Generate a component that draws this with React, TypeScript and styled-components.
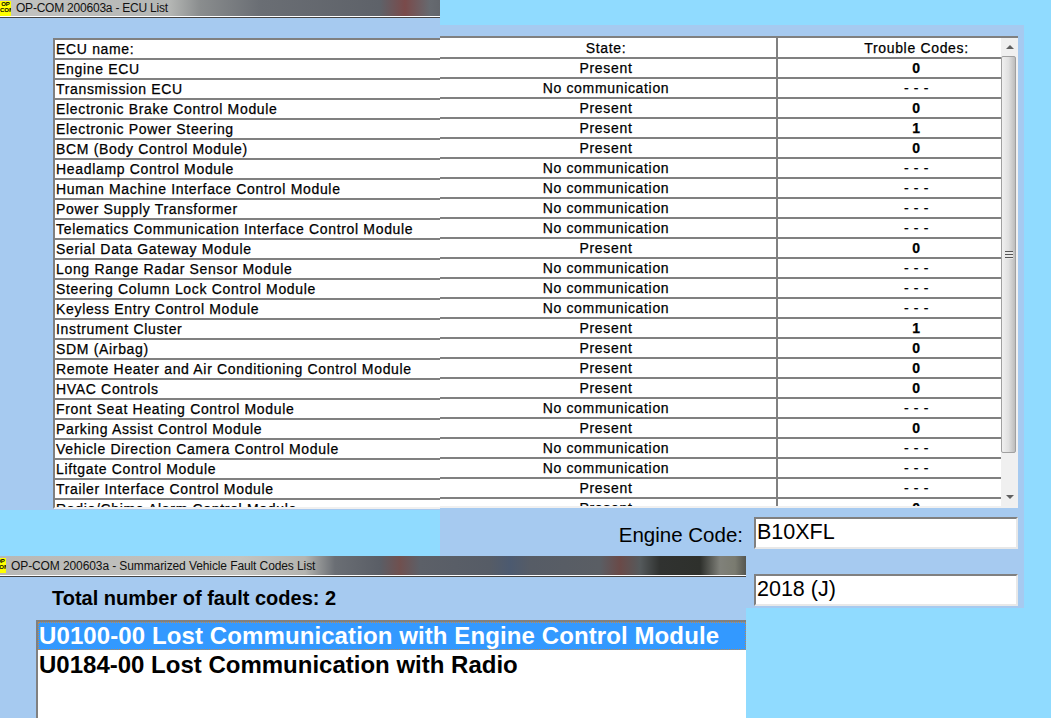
import { createGlobalStyle, styled } from "styled-components";

interface EcuRow {
  name: string;
  state: string;
  codes: string;
}

const NONE = "No communication";
const OK = "Present";
const DASH = "- - -";

const rows: EcuRow[] = [
  { name: "Engine ECU", state: OK, codes: "0" },
  { name: "Transmission ECU", state: NONE, codes: DASH },
  { name: "Electronic Brake Control Module", state: OK, codes: "0" },
  { name: "Electronic Power Steering", state: OK, codes: "1" },
  { name: "BCM (Body Control Module)", state: OK, codes: "0" },
  { name: "Headlamp Control Module", state: NONE, codes: DASH },
  { name: "Human Machine Interface Control Module", state: NONE, codes: DASH },
  { name: "Power Supply Transformer", state: NONE, codes: DASH },
  { name: "Telematics Communication Interface Control Module", state: NONE, codes: DASH },
  { name: "Serial Data Gateway Module", state: OK, codes: "0" },
  { name: "Long Range Radar Sensor Module", state: NONE, codes: DASH },
  { name: "Steering Column Lock Control Module", state: NONE, codes: DASH },
  { name: "Keyless Entry Control Module", state: NONE, codes: DASH },
  { name: "Instrument Cluster", state: OK, codes: "1" },
  { name: "SDM (Airbag)", state: OK, codes: "0" },
  { name: "Remote Heater and Air Conditioning Control Module", state: OK, codes: "0" },
  { name: "HVAC Controls", state: OK, codes: "0" },
  { name: "Front Seat Heating Control Module", state: NONE, codes: DASH },
  { name: "Parking Assist Control Module", state: OK, codes: "0" },
  { name: "Vehicle Direction Camera Control Module", state: NONE, codes: DASH },
  { name: "Liftgate Control Module", state: NONE, codes: DASH },
  { name: "Trailer Interface Control Module", state: OK, codes: DASH },
  { name: "Radio/Chime Alarm Control Module", state: OK, codes: "0" },
];

const GlobalStyle = createGlobalStyle`
  html, body {
    margin: 0;
    padding: 0;
    background: #90dbff;
    overflow: hidden;
  }
`;

const Desktop = styled.div`
  position: relative;
  width: 1051px;
  height: 718px;
  overflow: hidden;
  background: #90dbff;
  font-family: "Liberation Sans", Arial, sans-serif;
  color: #000;
`;

const ListWindow = styled.section`
  position: absolute;
  left: 0;
  top: 0;
  width: 440px;
  height: 510px;
  overflow: hidden;
  background: #a6caf0;
`;

const DetailWindow = styled.section`
  position: absolute;
  left: 440px;
  top: 25px;
  width: 584px;
  height: 583px;
  background: #a6caf0;
`;

const FaultWindow = styled.section`
  position: absolute;
  left: 0;
  top: 556px;
  width: 746px;
  height: 162px;
  overflow: hidden;
  background: #a6caf0;
`;

const TitleBar = styled.header<{ $tall?: boolean }>`
  display: flex;
  align-items: center;
  gap: 5px;
  height: ${(p) => (p.$tall ? 19 : 16)}px;
  border-bottom: 1px solid #fff;
  box-shadow: 0 1px 0 #444;
  background: ${(p) =>
    p.$tall
      ? "linear-gradient(90deg, #b8b8b6 0, #c4c4c0 240px, #b4b4b0 305px, #6a6e74 335px, #5a5e66 380px, #70504f 400px, #5c6068 420px, #565c66 490px, #4c5a70 510px, #565c66 530px, #5a5e64 600px, #6a4a48 620px, #555a5c 640px, #303230 660px, #2e302c 700px, #80817a 720px, #7a7b70 735px, #555650 746px)"
      : "linear-gradient(90deg, #c4c4c2 0, #b4b6b4 170px, #8a8d8e 200px, #6a6e74 260px, #5e6269 380px, #7a4a4a 405px, #666a70 430px, #62666c 440px)"};
  font-size: 12px;
  letter-spacing: ${(p) => (p.$tall ? -0.1 : -0.22)}px;
  color: #111;
`;

const AppIcon = styled.div<{ $cut?: boolean }>`
  flex: none;
  width: 11px;
  height: 15px;
  margin-left: ${(p) => (p.$cut ? -5 : 0)}px;
  background: #ffff00;
  color: #000;
  font-size: 6px;
  font-weight: 700;
  letter-spacing: 0;
  line-height: 6px;
  text-align: center;
  overflow: hidden;
`;

const NameList = styled.div`
  box-sizing: border-box;
  margin: 21px 0 0 53px;
  height: 471px;
  border-top: 2px solid #808080;
  border-left: 2px solid #808080;
  border-bottom: 2px solid #f0f0f0;
  background: #fff;
  overflow: hidden;
`;

const Cell = styled.div`
  box-sizing: border-box;
  height: 20px;
  line-height: 18px;
  border-bottom: 2px solid #808080;
  padding-left: 1px;
  font-size: 14px;
  letter-spacing: 0.67px;
  white-space: nowrap;
  overflow: hidden;
  -webkit-text-stroke: 0.25px #000;
`;

const StateCell = styled(Cell)`
  padding: 0 4px 0 0;
  text-align: center;
`;

const CodeCell = styled(Cell)<{ $strong?: boolean }>`
  padding: 0 0 0 54px;
  border-left: 2px solid #808080;
  text-align: center;
  font-weight: ${(p) => (p.$strong ? 700 : 400)};
`;

const GridFrame = styled.div`
  display: flex;
  margin-top: 11px;
  width: 578px;
  height: 472px;
  box-sizing: border-box;
  border-top: 2px solid #808080;
  border-bottom: 2px solid #f0f0f0;
  background: #fff;
  overflow: hidden;
`;

const StateGrid = styled.div`
  display: grid;
  grid-template-columns: 336px 225px;
  grid-template-rows: 21px;
  grid-auto-rows: 20px;
  width: 561px;

  > :nth-child(-n + 2) {
    height: 21px;
    line-height: 20px;
  }
`;

const ScrollBar = styled.div`
  display: flex;
  flex-direction: column;
  flex: none;
  width: 17px;
  background: #f0f0f0;
`;

const ScrollArrow = styled.div<{ $down?: boolean }>`
  flex: none;
  display: flex;
  justify-content: center;
  align-items: center;
  height: 18px;
  background: #f0f0f0;

  &::before {
    content: "";
    border-left: 4px solid transparent;
    border-right: 4px solid transparent;
    ${(p) => (p.$down ? "border-top" : "border-bottom")}: 4px solid #606060;
  }
`;

const ScrollThumb = styled.div`
  flex: none;
  display: flex;
  justify-content: center;
  align-items: center;
  height: 397px;
  margin: 0 2px 0 0;
  box-sizing: border-box;
  border: 1px solid #a0a0a0;
  border-radius: 2px;
  background: linear-gradient(90deg, #f0f0f0, #e0e0e0 50%, #bcbcbc);
`;

const ThumbGrip = styled.div`
  width: 8px;
  height: 8px;
  background: repeating-linear-gradient(180deg, #555 0 1px, #e8e8e8 1px 3px);
`;

const ScrollTrack = styled.div`
  flex: 1;
`;

const FormRows = styled.div`
  display: flex;
  flex-direction: column;
  gap: 25px;
  margin-top: 9px;
`;

const FormRow = styled.div`
  display: flex;
  align-items: center;
  justify-content: flex-end;
  height: 32px;
  width: 578px;
`;

const FieldLabel = styled.label`
  padding-top: 4px;
  font-size: 20.5px;
  margin-right: 11px;
  white-space: nowrap;
`;

const Field = styled.div`
  box-sizing: border-box;
  width: 264px;
  height: 32px;
  padding: 0 1px;
  border: 2px solid;
  border-color: #808080 #e8e8e8 #e8e8e8 #808080;
  background: #fff;
  font-size: 21.5px;
  line-height: 27px;
`;

const FaultTotal = styled.div`
  margin: 10px 0 0 52px;
  font-size: 20px;
  font-weight: 700;
  line-height: 24px;
`;

const FaultList = styled.ul`
  list-style: none;
  margin: 10px 0 0 36px;
  padding: 0;
  height: 100px;
  border-top: 2px solid #808080;
  border-left: 2px solid #808080;
  background: #fff;
`;

const FaultItem = styled.li<{ $selected?: boolean }>`
  height: 28px;
  line-height: ${(p) => (p.$selected ? 28 : 30)}px;
  padding-left: 1px;
  font-size: 24px;
  font-weight: 700;
  letter-spacing: ${(p) => (p.$selected ? 0.1 : 0)}px;
  white-space: nowrap;
  background: ${(p) => (p.$selected ? "#3399ff" : "transparent")};
  color: ${(p) => (p.$selected ? "#fff" : "#000")};
  outline: ${(p) => (p.$selected ? "1px dotted #c08a50" : "none")};
  outline-offset: -1px;
`;

const Icon = ({ cut }: { cut?: boolean }) => (
  <AppIcon $cut={cut}>
    OP
    <br />
    COM
  </AppIcon>
);

export default function App() {
  return (
    <Desktop>
      <GlobalStyle />
      <DetailWindow>
        <GridFrame>
          <StateGrid>
            <StateCell>State:</StateCell>
            <CodeCell>Trouble Codes:</CodeCell>
            {rows.map((row) => [
              <StateCell key={`${row.name}-state`}>{row.state}</StateCell>,
              <CodeCell $strong={row.codes !== DASH} key={`${row.name}-codes`}>
                {row.codes}
              </CodeCell>,
            ])}
          </StateGrid>
          <ScrollBar>
            <ScrollArrow />
            <ScrollThumb>
              <ThumbGrip />
            </ScrollThumb>
            <ScrollTrack />
            <ScrollArrow $down />
          </ScrollBar>
        </GridFrame>
        <FormRows>
          <FormRow>
            <FieldLabel>Engine Code:</FieldLabel>
            <Field>B10XFL</Field>
          </FormRow>
          <FormRow>
            <Field>2018 (J)</Field>
          </FormRow>
        </FormRows>
      </DetailWindow>
      <ListWindow>
        <TitleBar>
          <Icon />
          OP-COM 200603a - ECU List
        </TitleBar>
        <NameList>
          <Cell>ECU name:</Cell>
          {rows.map((row) => (
            <Cell key={row.name}>{row.name}</Cell>
          ))}
        </NameList>
      </ListWindow>
      <FaultWindow>
        <TitleBar $tall>
          <Icon cut />
          OP-COM 200603a - Summarized Vehicle Fault Codes List
        </TitleBar>
        <FaultTotal>Total number of fault codes: 2</FaultTotal>
        <FaultList>
          <FaultItem $selected>U0100-00 Lost Communication with Engine Control Module</FaultItem>
          <FaultItem>U0184-00 Lost Communication with Radio</FaultItem>
        </FaultList>
      </FaultWindow>
    </Desktop>
  );
}
